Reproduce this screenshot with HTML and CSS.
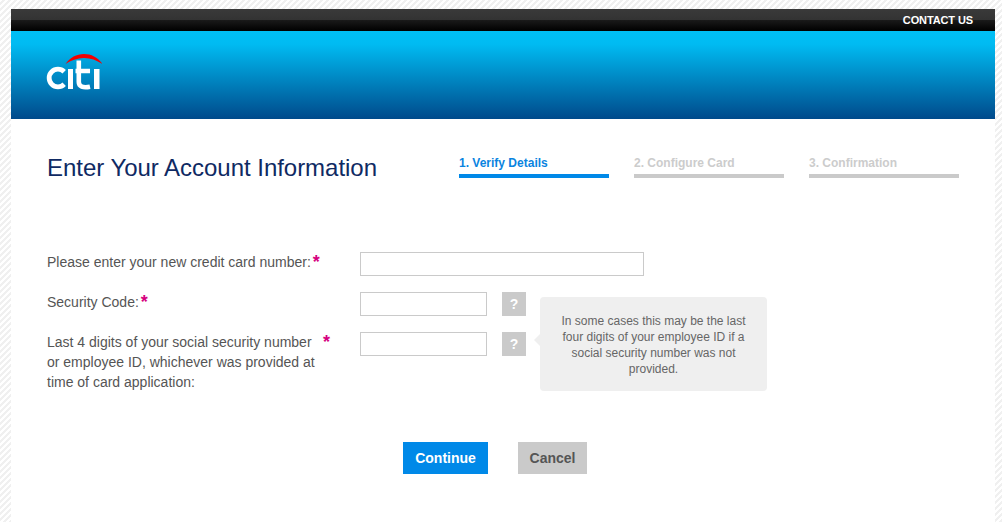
FILE: index.html
```html
<!DOCTYPE html>
<html lang="en">
<head>
<meta charset="utf-8">
<title>Enter Your Account Information</title>
<link rel="stylesheet" href="styles.css">
</head>
<body>
<div class="page">
  <div class="topbar"><a class="contact" href="#">CONTACT US</a></div>
  <header class="brand">
    <svg class="logo" width="56" height="38" viewBox="0 0 56 38" role="img" aria-label="citi">
      <path d="M19.500 11C24 4.500 30.500 1 38 1S52 4.500 56.500 11C51 7.500 45 5 38 5S25 7.500 19.500 11Z" fill="#f40000"/>
      <path d="M18.200 18.800A8.800 8.800 0 1 0 18.200 31.200" fill="none" stroke="#fff" stroke-width="4.800"/>
      <rect x="22" y="16" width="5" height="20" fill="#fff"/>
      <path d="M32.800 7.500V29C32.800 33.500 37 35.200 44 33.700M29.500 18H44" fill="none" stroke="#fff" stroke-width="4.600"/>
      <rect x="48" y="16" width="5.500" height="20" fill="#fff"/>
    </svg>
  </header>
  <main class="content">
    <div class="head">
      <h1 class="title">Enter Your Account Information</h1>
      <ol class="steps">
        <li class="step active">1. Verify Details</li>
        <li class="step">2. Configure Card</li>
        <li class="step">3. Confirmation</li>
      </ol>
    </div>
    <form class="form">
      <div class="row">
        <label class="label" for="card">Please enter your new credit card number:<span class="req">*</span></label>
        <input class="input wide" id="card" type="text">
      </div>
      <div class="row">
        <label class="label" for="code">Security Code:<span class="req">*</span></label>
        <input class="input" id="code" type="text">
        <span class="help">?</span>
      </div>
      <div class="row tall">
        <label class="label long" for="ssn"><span>Last 4 digits of your social security number or employee ID, whichever was provided at time of card application:</span><span class="req">*</span></label>
        <input class="input" id="ssn" type="text">
        <span class="help">?</span>
        <div class="tip">In some cases this may be the last four digits of your employee ID if a social security number was not provided.</div>
      </div>
      <div class="actions">
        <button class="btn primary" type="button">Continue</button>
        <button class="btn secondary" type="button">Cancel</button>
      </div>
    </form>
  </main>
</div>
</body>
</html>
```
FILE: styles.css
```css
* { box-sizing: border-box; }
html, body { height: 100%; }
body {
  margin: 0;
  overflow: hidden;
  font-family: "Liberation Sans", Arial, sans-serif;
  background: repeating-linear-gradient(135deg, #fff 0, #fff 2.120px, #f0f0f0 2.120px, #f0f0f0 4.240px);
}
.page {
  width: 984px;
  height: 513px;
  margin: 9px 0 0 11px;
  background: #fff;
}
.topbar {
  height: 22px;
  display: flex;
  align-items: center;
  justify-content: flex-end;
  padding: 0 22px 0 0;
  background: linear-gradient(#3a3a3a 0, #333 48%, #1a1a1a 50%, #000 100%);
}
.contact {
  color: #fff;
  font-size: 11px;
  font-weight: bold;
  letter-spacing: -0.01em;
  text-decoration: none;
}
.brand {
  height: 88px;
  padding: 22px 0 0 35px;
  background: linear-gradient(#00bff5 0, #00bbf2 15%, #004a8b 100%);
}
.logo { display: block; }
.content { padding: 0 36px; }
.head {
  display: flex;
  justify-content: space-between;
  height: 133px;
}
.title {
  margin: 35px 0 0;
  color: #0f2a63;
  font-size: 24px;
  font-weight: normal;
  line-height: 28px;
  letter-spacing: -0.03px;
}
.steps {
  display: flex;
  gap: 25px;
  margin: 36px 0 0;
  padding: 0;
  list-style: none;
}
.step {
  width: 150px;
  height: 23px;
  padding-top: 1px;
  color: #ccc;
  font-size: 12px;
  font-weight: bold;
  line-height: 14px;
  border-bottom: 4px solid #cacaca;
}
.step.active { color: #0a84e0; border-color: #0089e8; }
.form { color: #555; font-size: 14px; line-height: 20px; }
.row {
  display: flex;
  align-items: flex-start;
  height: 40px;
  position: relative;
}
.row.tall { height: 60px; }
.label { width: 313px; display: flex; }
.long span:first-child { width: 270px; flex: none; }
.long .req { margin-left: 6px; }
.req { color: #d6007f; font-size: 18px; font-weight: bold; margin-left: 2px; }
.input {
  width: 127px;
  height: 24px;
  margin: 0;
  border: 1px solid #cacaca;
  background: #fff;
}
.input.wide { width: 284px; }
.help {
  width: 24px;
  height: 24px;
  margin-left: 15px;
  color: #fff;
  background: #cacaca;
  font-weight: bold;
  line-height: 24px;
  text-align: center;
}
.tip {
  position: absolute;
  left: 493px;
  top: -35px;
  width: 227px;
  height: 94px;
  padding: 16px 18px;
  border-radius: 4px;
  background: #efefef;
  color: #666;
  font-size: 12px;
  line-height: 16px;
  text-align: center;
}
.tip::before {
  content: "";
  position: absolute;
  left: -6px;
  top: 37px;
  border: 6px solid transparent;
  border-left: 0;
  border-right-color: #efefef;
}
.actions {
  display: flex;
  justify-content: center;
  gap: 30px;
  padding: 50px 16px 0 0;
}
.btn {
  height: 32px;
  border: 0;
  padding: 0;
  font-family: inherit;
  font-size: 14px;
  font-weight: bold;
}
.primary { width: 85px; background: #0089e8; color: #fff; }
.secondary { width: 69px; background: #cacaca; color: #555; }
```
